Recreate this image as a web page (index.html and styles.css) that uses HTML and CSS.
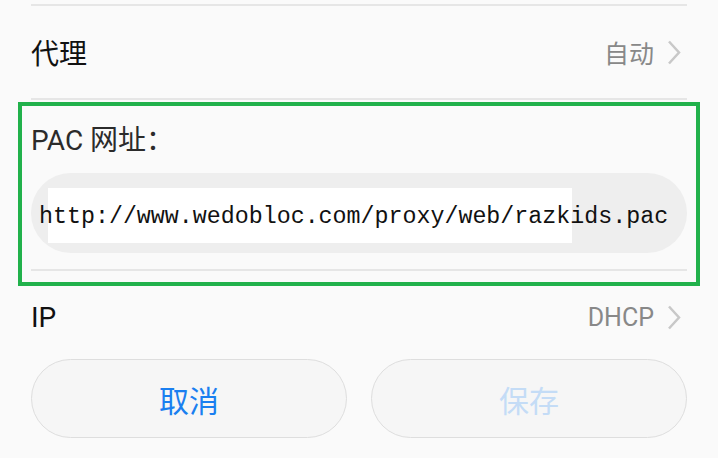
FILE: index.html
```html
<!DOCTYPE html>
<html lang="zh-CN">
<head>
  <meta charset="UTF-8">
  <meta name="viewport" content="width=device-width, initial-scale=1">
  <title>代理设置</title>
  <link rel="stylesheet" href="styles.css">
</head>

<body>

  <div class="settings">
    <div class="divider"></div>

    <!-- Proxy -->
    <div class="row">
      <span class="row-title">代理</span>
      <span class="row-value">
        自动
        <svg class="chevron" width="14" height="25" viewBox="0 0 14 25"><polyline points="2,1.5 12,12.5 2,23.5" /></svg>
      </span>
    </div>
    <div class="divider"></div>

    <!-- PAC address -->
    <div class="pac-box">
      <div class="pac-label">PAC 网址<span class="colon">：</span></div>
      <div class="pac-input">http://www.wedobloc.com/proxy/web/razkids.pac</div>
      <div class="divider"></div>
    </div>

    <!-- IP -->
    <div class="row row-ip">
      <span class="row-title">IP</span>
      <span class="row-value">
        DHCP
        <svg class="chevron" width="14" height="25" viewBox="0 0 14 25"><polyline points="2,1.5 12,12.5 2,23.5" /></svg>
      </span>
    </div>

    <div class="actions">
      <button class="btn btn-cancel">取消</button>
      <button class="btn btn-save" disabled>保存</button>
    </div>
  </div>

</body>
</html>
```

FILE: styles.css
```css
* {
  margin: 0;
  padding: 0;
  box-sizing: border-box;
}
body {
  background: #fafafa;
  font-family: Roboto, "Noto Sans CJK SC", sans-serif;
  color: #111;
}
.settings {
  padding: 4px 31px 0;
}
.divider {
  height: 2px;
  background: #e6e6e6;
}
.row {
  height: 92px;
  display: flex;
  align-items: center;
  justify-content: space-between;
}
.row-title {
  font-size: 28px;
  color: #111;
}
.row-value {
  display: flex;
  align-items: center;
  gap: 13px;
  margin-right: 6px;
  font-size: 25px;
  color: #888;
}
.chevron polyline {
  fill: none;
  stroke: #c8c8c8;
  stroke-width: 2.5;
}

/* PAC box */
.pac-box {
  margin: 2px -13px 0;
  border: 4px solid #21b14b;
  padding: 15px 9px 11px;
}
.pac-label {
  font-size: 28px;
  line-height: 34px;
  height: 34px;
  color: #2b2b2b;
}
.colon {
  font-family: "Noto Sans CJK TC", sans-serif;
}
.pac-input {
  margin: 18px 0 16px;
  height: 80px;
  border-radius: 40px;
  background: linear-gradient(#fff, #fff) 17px 15px / 524px 55px no-repeat, #eeeeee;
  display: flex;
  align-items: center;
  padding: 7px 0 0 8px;
  font-family: "Liberation Mono", monospace;
  font-size: 23.3px;
  color: #111;
  white-space: nowrap;
}

/* IP + buttons */
.row-ip {
  height: 62px;
}
.actions {
  margin-top: 11px;
  display: flex;
  gap: 24px;
}
.btn {
  flex: 1;
  height: 79px;
  border-radius: 40px;
  border: 1px solid #dedede;
  background: #f6f6f6;
  font-family: Roboto, "Noto Sans CJK SC", sans-serif;
  font-size: 30px;
}
.btn-cancel {
  color: #1a7ff0;
}
.btn-save {
  color: #c4dcf6;
}
```
